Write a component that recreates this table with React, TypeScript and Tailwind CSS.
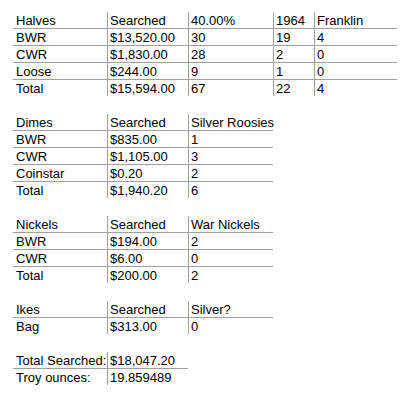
import React from "react";

type Row = string[];

const widths = ["w-[94px]", "w-[81px]", "w-[85px]", "w-[41px]", "w-[83px]"];

function Section({ rows }: { rows: Row[] }) {
  return (
    <div className="flex flex-col items-start">
      {rows.map((r, i) => (
        <div
          key={i}
          className={`flex h-[17px] border-t ${i === 0 ? "border-transparent" : "border-[#a0a0a0]"}`}
        >
          {r.map((c, j) => (
            <div
              key={j}
              className={`${widths[j]} shrink-0 h-full whitespace-nowrap pt-[1px] leading-[15px] ${
                j === 0 ? "pl-[3px]" : "border-l border-[#a0a0a0] pl-[2px]"
              }`}
            >
              {c}
            </div>
          ))}
        </div>
      ))}
    </div>
  );
}

function Spacer() {
  return <div className="h-[17px]" />;
}

export default function App() {
  return (
    <div
      className="w-[416px] h-[401px] bg-white text-black text-[13px] pt-[11px] pl-[13px]"
      style={{ fontFamily: '"Liberation Sans", Arial, sans-serif' }}
    >
      <Section
        rows={[
          ["Halves", "Searched", "40.00%", "1964", "Franklin"],
          ["BWR", "$13,520.00", "30", "19", "4"],
          ["CWR", "$1,830.00", "28", "2", "0"],
          ["Loose", "$244.00", "9", "1", "0"],
          ["Total", "$15,594.00", "67", "22", "4"],
        ]}
      />
      <Spacer />
      <Section
        rows={[
          ["Dimes", "Searched", "Silver Roosies"],
          ["BWR", "$835.00", "1"],
          ["CWR", "$1,105.00", "3"],
          ["Coinstar", "$0.20", "2"],
          ["Total", "$1,940.20", "6"],
        ]}
      />
      <Spacer />
      <Section
        rows={[
          ["Nickels", "Searched", "War Nickels"],
          ["BWR", "$194.00", "2"],
          ["CWR", "$6.00", "0"],
          ["Total", "$200.00", "2"],
        ]}
      />
      <Spacer />
      <Section
        rows={[
          ["Ikes", "Searched", "Silver?"],
          ["Bag", "$313.00", "0"],
        ]}
      />
      <Spacer />
      <Section
        rows={[
          ["Total Searched:", "$18,047.20"],
          ["Troy ounces:", "19.859489"],
        ]}
      />
    </div>
  );
}
